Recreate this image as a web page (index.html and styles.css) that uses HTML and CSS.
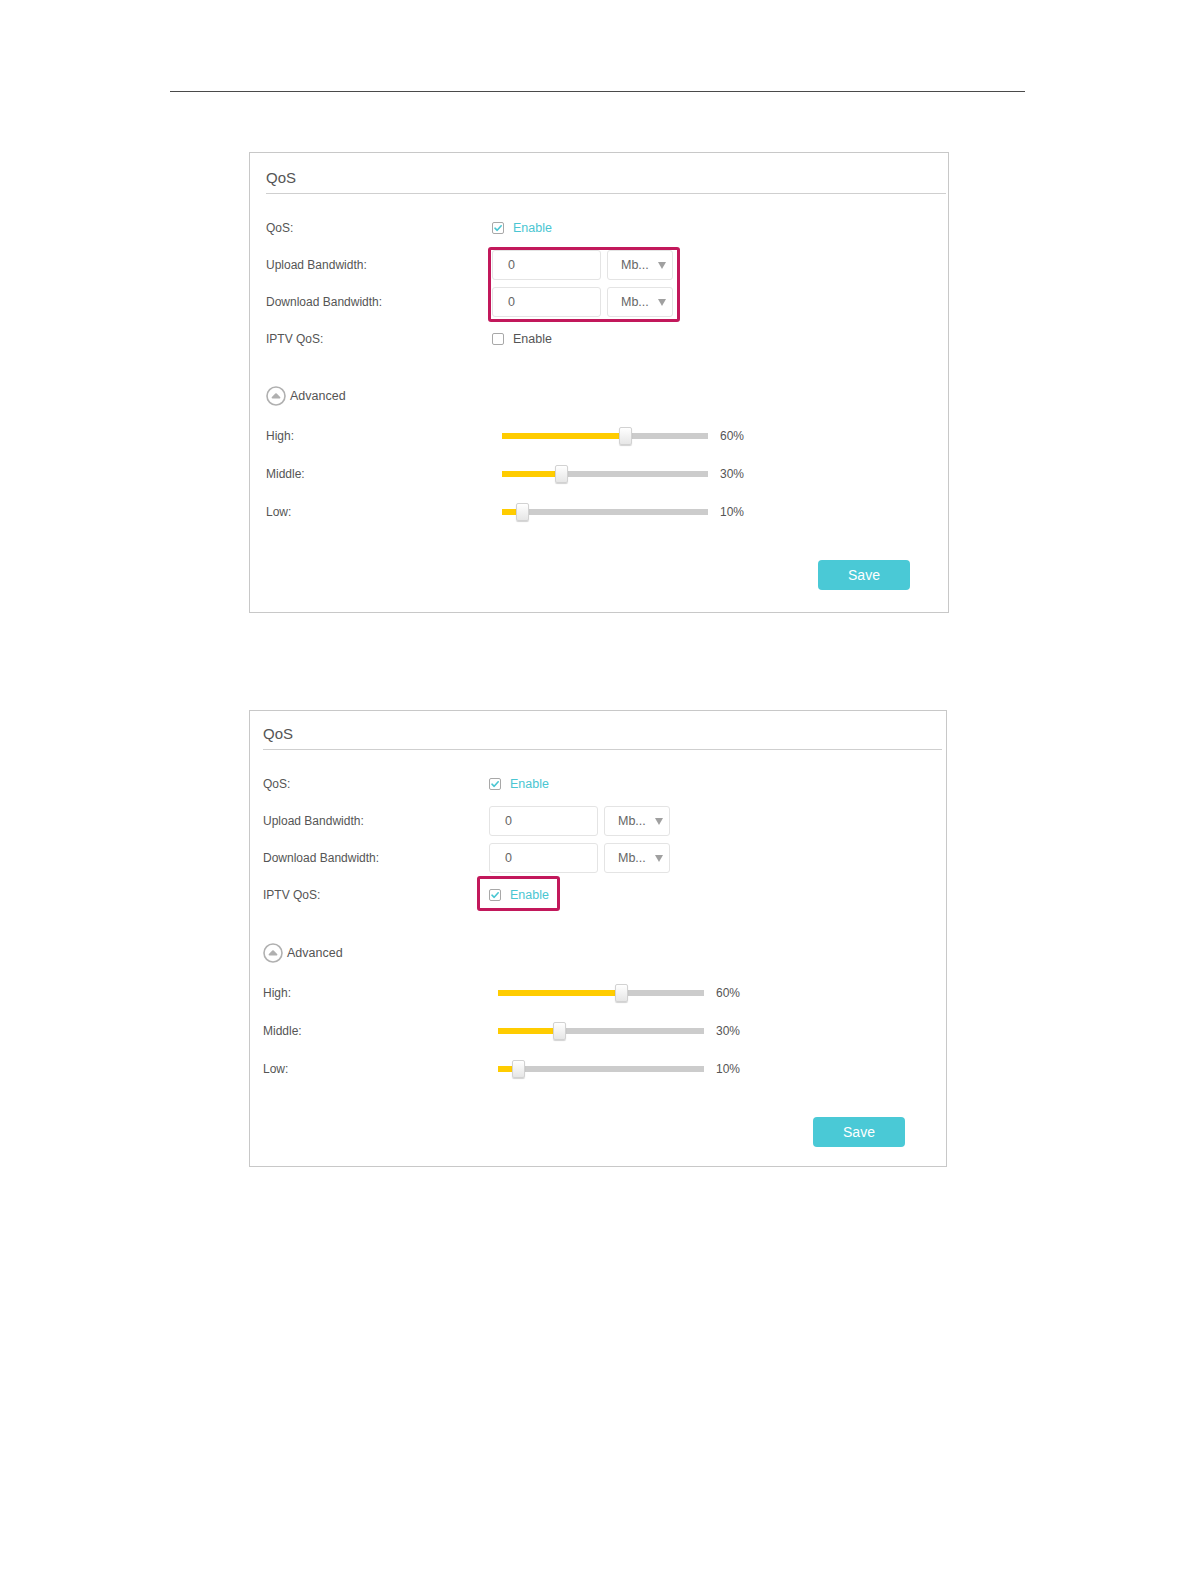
FILE: index.html
```html
<!DOCTYPE html>
<html>
<head>
<meta charset="utf-8">
<link rel="stylesheet" href="styles.css">
</head>
<body>
<div class="page">
  <div class="rule"></div>

  <section class="panel panel--first">
    <div class="panel-head"><span class="panel-title">QoS</span></div>
    <div class="rows">
      <div class="row">
        <span class="label">QoS:</span>
        <label class="check check--on"><span class="box"><svg viewBox="0 0 12 12" width="12" height="12"><path d="M3 6.2 L5.2 8.3 L9.2 3.8" fill="none" stroke="#4ac6d2" stroke-width="1.6" stroke-linecap="round" stroke-linejoin="round"/></svg></span><span class="check-text">Enable</span></label>
      </div>
      <div class="row">
        <span class="label">Upload Bandwidth:</span>
        <div class="field"><span class="input">0</span><span class="select">Mb...<i class="arrow"></i></span></div>
      </div>
      <div class="row">
        <span class="label">Download Bandwidth:</span>
        <div class="field"><span class="input">0</span><span class="select">Mb...<i class="arrow"></i></span></div>
      </div>
      <div class="row">
        <span class="label">IPTV QoS:</span>
        <label class="check"><span class="box"></span><span class="check-text">Enable</span></label>
      </div>
    </div>
    <div class="advanced">
      <svg class="adv-icon" viewBox="0 0 20 20" width="20" height="20"><circle cx="10" cy="10" r="9" fill="none" stroke="#b0b0b0" stroke-width="1.6"/><path d="M6.6 11.6 L10 8.2 L13.4 11.6 Z" fill="#b0b0b0" stroke="#b0b0b0" stroke-width="2" stroke-linejoin="round"/></svg>
      <span class="adv-text">Advanced</span>
    </div>
    <div class="sliders">
      <div class="srow"><span class="label">High:</span><div class="track" style="--v:60%"><span class="fill"></span><span class="thumb"></span></div><span class="pct">60%</span></div>
      <div class="srow"><span class="label">Middle:</span><div class="track" style="--v:29%"><span class="fill"></span><span class="thumb"></span></div><span class="pct">30%</span></div>
      <div class="srow"><span class="label">Low:</span><div class="track" style="--v:10%"><span class="fill"></span><span class="thumb"></span></div><span class="pct">10%</span></div>
    </div>
    <div class="actions"><button class="save">Save</button></div>
    <div class="mark mark--bandwidth"></div>
  </section>

  <section class="panel panel--second">
    <div class="panel-head"><span class="panel-title">QoS</span></div>
    <div class="rows">
      <div class="row">
        <span class="label">QoS:</span>
        <label class="check check--on"><span class="box"><svg viewBox="0 0 12 12" width="12" height="12"><path d="M3 6.2 L5.2 8.3 L9.2 3.8" fill="none" stroke="#4ac6d2" stroke-width="1.6" stroke-linecap="round" stroke-linejoin="round"/></svg></span><span class="check-text">Enable</span></label>
      </div>
      <div class="row">
        <span class="label">Upload Bandwidth:</span>
        <div class="field"><span class="input">0</span><span class="select">Mb...<i class="arrow"></i></span></div>
      </div>
      <div class="row">
        <span class="label">Download Bandwidth:</span>
        <div class="field"><span class="input">0</span><span class="select">Mb...<i class="arrow"></i></span></div>
      </div>
      <div class="row">
        <span class="label">IPTV QoS:</span>
        <label class="check check--on"><span class="box"><svg viewBox="0 0 12 12" width="12" height="12"><path d="M3 6.2 L5.2 8.3 L9.2 3.8" fill="none" stroke="#4ac6d2" stroke-width="1.6" stroke-linecap="round" stroke-linejoin="round"/></svg></span><span class="check-text">Enable</span></label>
      </div>
    </div>
    <div class="advanced">
      <svg class="adv-icon" viewBox="0 0 20 20" width="20" height="20"><circle cx="10" cy="10" r="9" fill="none" stroke="#b0b0b0" stroke-width="1.6"/><path d="M6.6 11.6 L10 8.2 L13.4 11.6 Z" fill="#b0b0b0" stroke="#b0b0b0" stroke-width="2" stroke-linejoin="round"/></svg>
      <span class="adv-text">Advanced</span>
    </div>
    <div class="sliders">
      <div class="srow"><span class="label">High:</span><div class="track" style="--v:60%"><span class="fill"></span><span class="thumb"></span></div><span class="pct">60%</span></div>
      <div class="srow"><span class="label">Middle:</span><div class="track" style="--v:30%"><span class="fill"></span><span class="thumb"></span></div><span class="pct">30%</span></div>
      <div class="srow"><span class="label">Low:</span><div class="track" style="--v:10%"><span class="fill"></span><span class="thumb"></span></div><span class="pct">10%</span></div>
    </div>
    <div class="actions"><button class="save">Save</button></div>
    <div class="mark mark--iptv"></div>
  </section>
</div>
</body>
</html>
```

FILE: styles.css
```css
* { box-sizing: border-box; }
html, body { margin: 0; padding: 0; background: #fff; }
body {
  font-family: "Liberation Sans", Arial, sans-serif;
  color: #555;
  font-size: 12px;
}
.page {
  width: 1196px;
  height: 1582px;
  padding-top: 91px;
}
.rule {
  margin-left: 170px;
  width: 855px;
  height: 0;
  border-top: 1px solid #4a4a4a;
}

.panel {
  position: relative;
  margin-left: 249px;
  border: 1px solid #c8c8c8;
  --pl: 16px;
  --pr: 2px;
  --track-gap: 10px;
  --save-right: 38px;
}
.panel--first {
  margin-top: 60px;
  width: 700px;
  padding-bottom: 22px;
}
.panel--second {
  margin-top: 97px;
  width: 698px;
  padding-bottom: 19px;
  --pl: 13px;
  --pr: 4px;
  --track-gap: 9px;
  --save-right: 41px;
}

.panel-head {
  margin-left: var(--pl);
  margin-right: var(--pr);
  height: 41px;
  padding-top: 9px;
  border-bottom: 1px solid #cfcfcf;
}
.panel--second .panel-head {
  height: 39px;
  padding-top: 7px;
}
.panel-title {
  display: block;
  font-size: 15px;
  line-height: 32px;
  color: #555;
}

.rows {
  margin-top: 15px;
  padding-left: var(--pl);
}
.row {
  display: flex;
  align-items: center;
  height: 37px;
}
.label {
  flex: 0 0 226px;
  font-size: 12px;
  color: #555;
}

.check {
  display: flex;
  align-items: center;
  gap: 9px;
  font-size: 12.5px;
  color: #555;
}
.check--on { color: #4ac6d2; }
.box {
  width: 12px;
  height: 12px;
  border: 1px solid #a8a8a8;
  border-radius: 2px;
  display: flex;
  align-items: center;
  justify-content: center;
  background: #fff;
}
.box svg { display: block; margin: -1px; }

.field {
  display: flex;
  gap: 6px;
}
.input {
  width: 109px;
  height: 30px;
  border: 1px solid #e4e4e4;
  border-radius: 3px;
  padding-left: 15px;
  line-height: 28px;
  font-size: 12.5px;
  color: #666;
}
.select {
  position: relative;
  width: 66px;
  height: 30px;
  border: 1px solid #e4e4e4;
  border-radius: 3px;
  padding-left: 13px;
  line-height: 28px;
  font-size: 12.5px;
  color: #666;
}
.arrow {
  position: absolute;
  right: 6px;
  top: 11px;
  width: 0;
  height: 0;
  border-left: 4.5px solid transparent;
  border-right: 4.5px solid transparent;
  border-top: 7px solid #a0a0a0;
}

.advanced {
  margin-top: 27px;
  padding-left: var(--pl);
  display: flex;
  align-items: center;
  gap: 4px;
  height: 24px;
}
.panel--second .advanced { margin-top: 28px; }
.adv-icon { display: block; }
.adv-text {
  font-size: 12.5px;
  color: #555;
}

.sliders {
  margin-top: 9px;
  padding-left: var(--pl);
}
.srow {
  display: flex;
  align-items: center;
  height: 38px;
}
.track {
  position: relative;
  margin-left: var(--track-gap);
  width: 206px;
  height: 6px;
  background: #cccccc;
}
.fill {
  position: absolute;
  left: 0;
  top: 0;
  height: 6px;
  width: var(--v);
  background: #ffcc00;
}
.thumb {
  position: absolute;
  top: -6px;
  left: calc(var(--v) - 6.5px);
  width: 13px;
  height: 18px;
  border: 1px solid #d2d2d2;
  border-radius: 2px;
  background: linear-gradient(#ffffff, #e6e6e6);
  box-shadow: 0 1px 1px rgba(0,0,0,0.18);
}
.pct {
  margin-left: 12px;
  font-size: 12px;
  color: #555;
}

.actions {
  margin-top: 29px;
  display: flex;
  justify-content: flex-end;
  padding-right: var(--save-right);
}
.save {
  width: 92px;
  height: 30px;
  border: 0;
  border-radius: 4px;
  background: #4ac9d6;
  color: #fff;
  font-family: "Liberation Sans", Arial, sans-serif;
  font-size: 14px;
  padding: 0;
}

.mark {
  position: absolute;
  border: 3px solid #c2185b;
  border-radius: 3px;
}
.mark--bandwidth {
  left: 238px;
  top: 94px;
  width: 192px;
  height: 75px;
}
.mark--iptv {
  left: 227px;
  top: 165px;
  width: 83px;
  height: 35px;
}
```
